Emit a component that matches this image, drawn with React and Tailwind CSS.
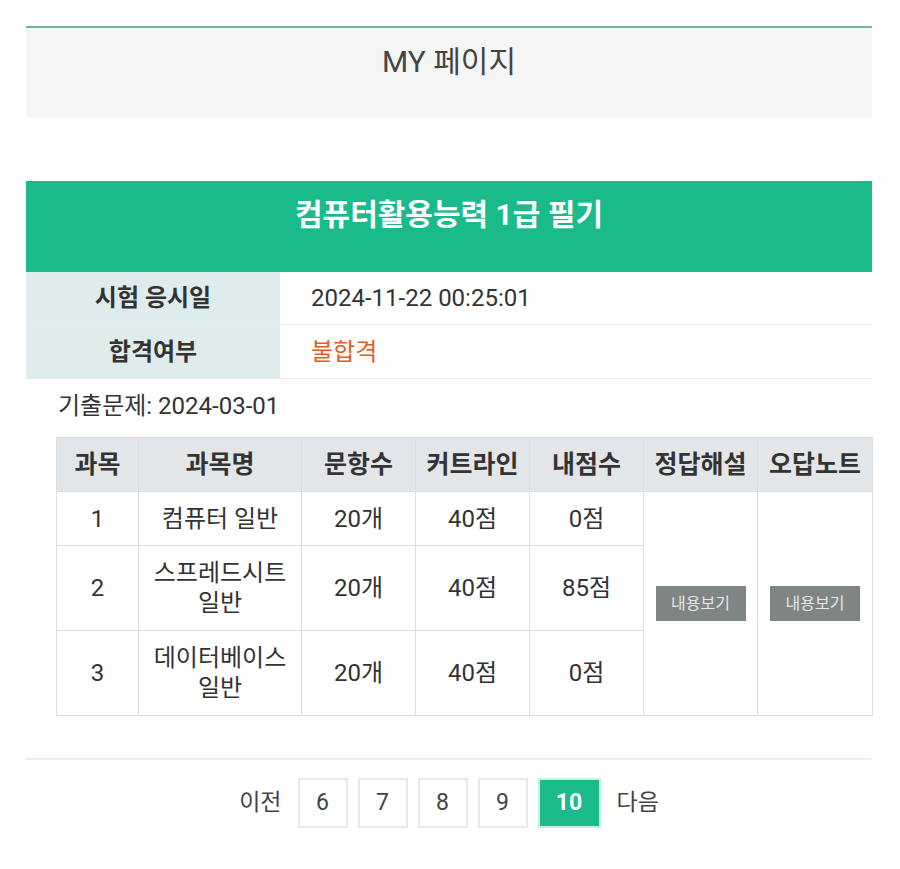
const font = { fontFamily: 'Roboto, "Noto Sans CJK KR", sans-serif' };

const rows = [
  { no: 1, name: ['컴퓨터 일반'], count: '20개', cut: '40점', score: '0점' },
  { no: 2, name: ['스프레드시트', '일반'], count: '20개', cut: '40점', score: '85점' },
  { no: 3, name: ['데이터베이스', '일반'], count: '20개', cut: '40점', score: '0점' },
];

const heads = ['과목', '과목명', '문항수', '커트라인', '내점수', '정답해설', '오답노트'];
const widths = ['w-[82px]', 'w-[163px]', 'w-[114px]', 'w-[114px]', 'w-[114px]', 'w-[114px]', 'w-[115px]'];

function ViewButton() {
  return (
    <button className="bg-[#7f8582] text-[#e4e8e6] text-[16px] leading-[35px] w-[90px] h-[35px]">
      내용보기
    </button>
  );
}

export default function App() {
  return (
    <div className="min-h-screen bg-white text-[#333] pt-[26px]" style={font}>
      <div className="ml-[26px] w-[846px] border-t-2 border-[#6fb4a4] bg-[#f5f5f5] h-[92px] flex justify-center pt-[14px]">
        <h1 className="text-[30px] text-[#444] leading-[40px]">MY 페이지</h1>
      </div>

      <div className="ml-[26px] w-[846px] mt-[63px]">
        <div className="bg-[#1aba8a] h-[91px] flex justify-center pt-[15px]">
          <h2 className="text-white text-[30px] font-bold leading-[38px]">컴퓨터활용능력 1급 필기</h2>
        </div>
        <div className="flex border-b border-[#e1ecec] h-[53px]">
          <div className="w-[254px] bg-[#dfecec] flex items-center justify-center text-[24px] font-bold text-[#333]">시험 응시일</div>
          <div className="flex-1 flex items-center pl-[31px] text-[24px] text-[#333]">2024-11-22 00:25:01</div>
        </div>
        <div className="flex border-b border-[#e1ecec] h-[54px]">
          <div className="w-[254px] bg-[#dfecec] flex items-center justify-center text-[24px] font-bold text-[#333]">합격여부</div>
          <div className="flex-1 flex items-center pl-[31px] text-[24px] text-[#e35d22]">불합격</div>
        </div>
        <p className="pl-[32px] text-[24px] leading-[30px] mt-[12px] text-[#333]">기출문제: 2024-03-01</p>

        <table className="ml-[30px] mt-[16px] w-[816px] border-collapse text-[24px] leading-[30px] text-center table-fixed">
          <thead>
            <tr className="bg-[#e3e6e8]">
              {heads.map((h, i) => (
                <th key={h} className={`${widths[i]} border border-[#dcdedf] h-[54px] text-[25px] font-bold text-[#333]`}>{h}</th>
              ))}
            </tr>
          </thead>
          <tbody>
            {rows.map((r, i) => (
              <tr key={r.no} className={i === 0 ? 'h-[54px]' : 'h-[85px]'}>
                <td className="border border-[#dcdedf]">{r.no}</td>
                <td className="border border-[#dcdedf]">
                  {r.name.map((n) => (
                    <div key={n}>{n}</div>
                  ))}
                </td>
                <td className="border border-[#dcdedf]">{r.count}</td>
                <td className="border border-[#dcdedf]">{r.cut}</td>
                <td className="border border-[#dcdedf]">{r.score}</td>
                {i === 0 && (
                  <>
                    <td rowSpan={3} className="border border-[#dcdedf] align-middle"><ViewButton /></td>
                    <td rowSpan={3} className="border border-[#dcdedf] align-middle"><ViewButton /></td>
                  </>
                )}
              </tr>
            ))}
          </tbody>
        </table>

        <div className="mt-[42px] border-t-2 border-[#e6eeee] flex items-center justify-center pt-[18px] gap-[10px] text-[23px] text-[#444]">
          <span className="mr-[6px]">이전</span>
          {[6, 7, 8, 9].map((n) => (
            <span key={n} className="w-[50px] h-[50px] border-2 border-[#e6eaea] flex items-center justify-center">{n}</span>
          ))}
          <span className="w-[63px] h-[50px] bg-[#1aba8a] border-2 border-[#cbeee2] text-white font-bold flex items-center justify-center">10</span>
          <span className="ml-[6px]">다음</span>
        </div>
      </div>
    </div>
  );
}
